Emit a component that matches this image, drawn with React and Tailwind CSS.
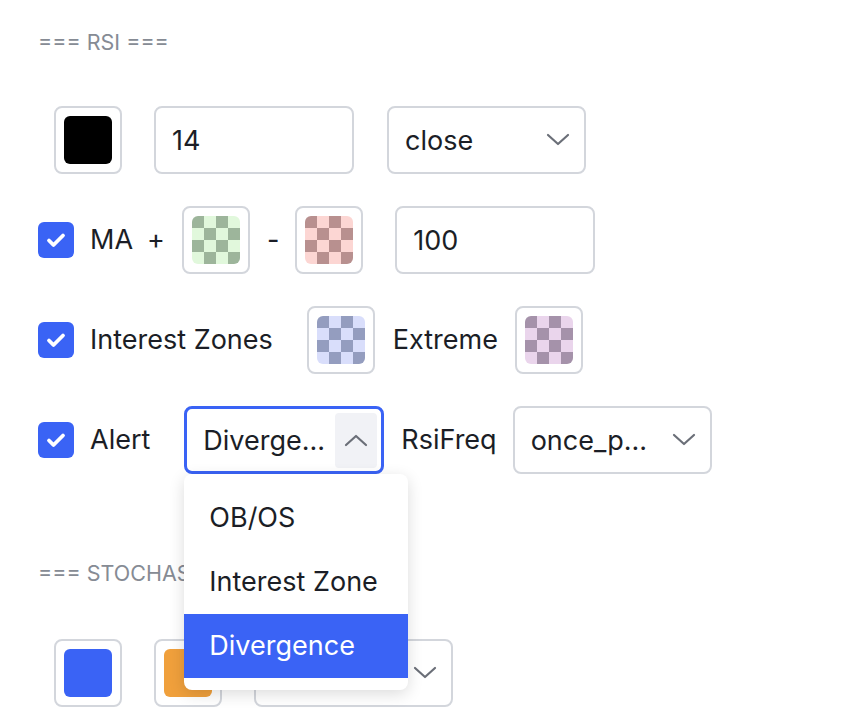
import React from "react";

function Checker({ dark, light }) {
  const cells = [];
  for (let r = 0; r < 4; r++) {
    for (let c = 0; c < 4; c++) {
      const isDark = (r + c) % 2 === 0;
      cells.push(
        <div key={r * 4 + c} style={{ background: isDark ? dark : light }} />
      );
    }
  }
  return (
    <div className="grid grid-cols-4 grid-rows-4 w-[48px] h-[48px] rounded-[6px] overflow-hidden">
      {cells}
    </div>
  );
}

function Swatch({ children }) {
  return (
    <div className="w-[68px] h-[68px] shrink-0 rounded-[8px] border-2 border-[#d3d6dc] bg-white flex items-center justify-center">
      {children}
    </div>
  );
}

function Solid({ color }) {
  return <div className="w-[48px] h-[48px] rounded-[6px]" style={{ background: color }} />;
}

function Check() {
  return (
    <div className="w-[36px] h-[36px] shrink-0 rounded-[6px] bg-[#3a63f5] flex items-center justify-center">
      <svg width="24" height="24" viewBox="0 0 24 24" fill="none">
        <path d="M5 12.5l4.5 4.5L19 7.5" stroke="white" strokeWidth="3.8" strokeLinecap="round" strokeLinejoin="round" />
      </svg>
    </div>
  );
}

function ChevronDown() {
  return (
    <svg width="24" height="14" viewBox="0 0 24 14" fill="none">
      <path d="M2 2l10 9 10-9" stroke="#6b6f78" strokeWidth="2.2" strokeLinecap="round" strokeLinejoin="round" />
    </svg>
  );
}

function ChevronUp() {
  return (
    <svg width="24" height="14" viewBox="0 0 24 14" fill="none">
      <path d="M2 12l10-9 10 9" stroke="#6b6f78" strokeWidth="2.2" strokeLinecap="round" strokeLinejoin="round" />
    </svg>
  );
}

function Input({ value }) {
  return (
    <div className="w-[200px] h-[68px] shrink-0 rounded-[8px] border-2 border-[#d3d6dc] bg-white flex items-center pl-[16px] pt-[2px] text-[27px] text-[#1b1e26]">
      {value}
    </div>
  );
}

function Select({ value }) {
  return (
    <div className="w-[199px] h-[68px] shrink-0 rounded-[8px] border-2 border-[#d3d6dc] bg-white flex items-center justify-between pl-[16px] pr-[14px] text-[27px] text-[#1b1e26]">
      <span className="pt-[2px]">{value}</span>
      <ChevronDown />
    </div>
  );
}

export default function App() {
  return (
    <div
      className="w-[844px] h-[714px] bg-white overflow-hidden relative pl-[38px] text-[#1b1e26]"
      style={{ fontFamily: "Inter, 'Noto Sans', sans-serif" }}
    >
      <div className="pt-[28px] h-[56px] flex items-center text-[21.5px] text-[#868b94]">=== RSI ===</div>

      <div className="mt-[50px] h-[68px] flex items-center pl-[16px]">
        <Swatch><Solid color="#000000" /></Swatch>
        <div className="ml-[32px]"><Input value="14" /></div>
        <div className="ml-[33px]"><Select value="close" /></div>
      </div>

      <div className="mt-[32px] h-[68px] flex items-center text-[27px]">
        <Check />
        <span className="ml-[16px]">MA</span>
        <span className="ml-[14px]">+</span>
        <div className="ml-[17px]">
          <Swatch><Checker dark="#9db59b" light="#e1f8dc" /></Swatch>
        </div>
        <span className="ml-[17px]">-</span>
        <div className="ml-[16px]">
          <Swatch><Checker dark="#b8908f" light="#fcd6d3" /></Swatch>
        </div>
        <div className="ml-[32px]"><Input value="100" /></div>
      </div>

      <div className="mt-[32px] h-[68px] flex items-center text-[27px]">
        <Check />
        <span className="ml-[16px]">Interest Zones</span>
        <div className="ml-[34px]">
          <Swatch><Checker dark="#949dbf" light="#d9defb" /></Swatch>
        </div>
        <span className="ml-[18px]">Extreme</span>
        <div className="ml-[17px]">
          <Swatch><Checker dark="#a592aa" light="#ead5ec" /></Swatch>
        </div>
      </div>

      <div className="mt-[32px] h-[68px] flex items-center text-[27px]">
        <Check />
        <span className="ml-[16px]">Alert</span>
        <div className="ml-[34px] relative">
          <div className="w-[200px] h-[68px] rounded-[8px] border-[3px] border-[#3a63f5] bg-white flex items-center justify-between pl-[16px] pr-[4px]">
            <span className="pt-[2px]">Diverge...</span>
            <div className="w-[42px] h-[55px] rounded-[4px] bg-[#f1f2f6] flex items-center justify-center">
              <ChevronUp />
            </div>
          </div>
          <div className="absolute left-0 top-[68px] w-[224px] py-[12px] bg-white rounded-[8px] shadow-[0_4px_16px_rgba(0,0,0,0.14)] z-10">
            <div className="h-[64px] flex items-center pl-[25px]">OB/OS</div>
            <div className="h-[64px] flex items-center pl-[25px]">Interest Zone</div>
            <div className="h-[64px] flex items-center pl-[25px] bg-[#3a63f5] text-white">Divergence</div>
          </div>
        </div>
        <span className="ml-[17px]">RsiFreq</span>
        <div className="ml-[16px]"><Select value="once_p..." /></div>
      </div>

      <div className="mt-[85px] h-[28px] flex items-center text-[21.5px] text-[#868b94]">=== STOCHASTIC ===</div>

      <div className="mt-[52px] h-[68px] flex items-center pl-[16px]">
        <Swatch><Solid color="#3a63f5" /></Swatch>
        <div className="ml-[32px]"><Swatch><Solid color="#f0a03c" /></Swatch></div>
        <div className="ml-[32px]"><Select value="" /></div>
      </div>
    </div>
  );
}
